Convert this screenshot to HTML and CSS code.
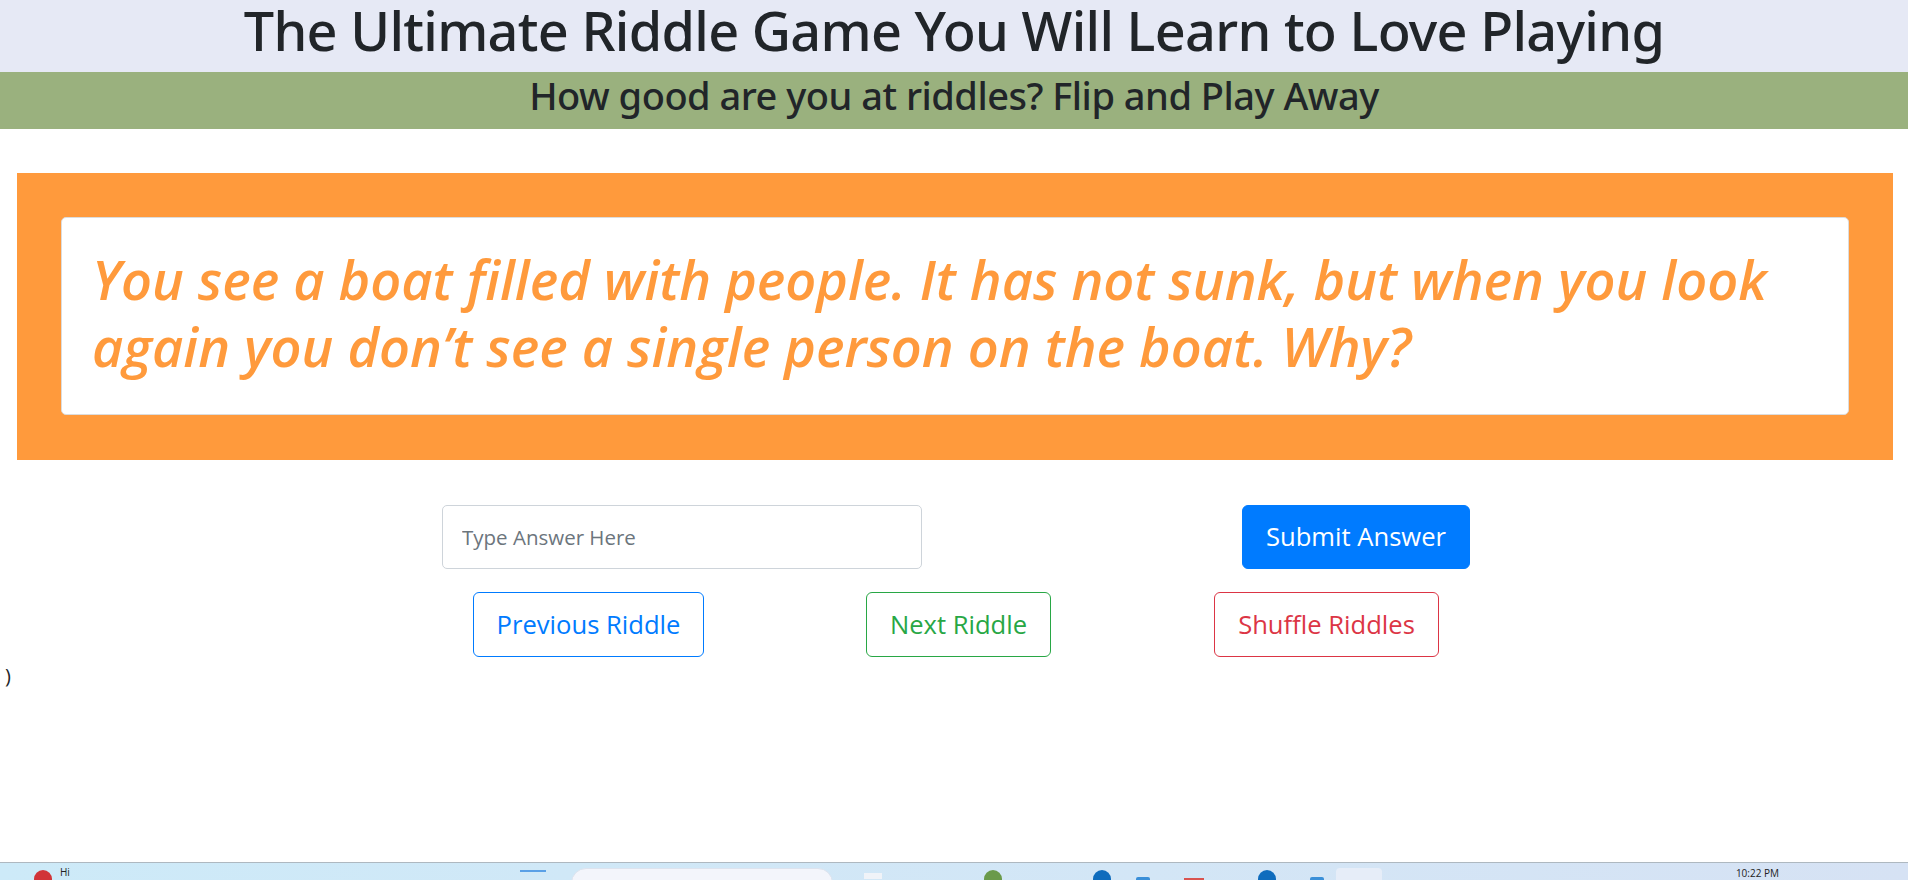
FILE: index.html
```html
<!DOCTYPE html>
<html lang="en">
<head>
<meta charset="utf-8">
<title>Riddle Game</title>
<link rel="stylesheet" href="styles.css">
</head>
<body>
<header class="title-band">
  <h1 class="title">The Ultimate Riddle Game You Will Learn to Love Playing</h1>
</header>
<div class="sub-band">
  <h2 class="subtitle">How good are you at riddles? Flip and Play Away</h2>
</div>
<section class="riddle-panel">
  <div class="riddle-card">
    <h1 class="riddle-text">You see a boat filled with people. It has not sunk, but when you look again you don’t see a single person on the boat. Why?</h1>
  </div>
</section>
<div class="answer-row">
  <input class="answer-input" type="text" placeholder="Type Answer Here">
  <button class="btn btn-submit">Submit Answer</button>
</div>
<div class="nav-row">
  <div class="nav-cell"><button class="btn btn-outline-blue">Previous Riddle</button></div>
  <div class="nav-cell"><button class="btn btn-outline-green">Next Riddle</button></div>
  <div class="nav-cell"><button class="btn btn-outline-red">Shuffle Riddles</button></div>
</div>
<p class="stray">)</p>
<div class="taskbar">
  <span class="tb-dot tb-red tb-first"></span>
  <span class="tb-text">Hi</span>
  <span class="tb-bar tb-gap1"></span>
  <span class="tb-search"></span>
  <span class="tb-square"></span>
  <span class="tb-dot tb-green tb-gap2"></span>
  <span class="tb-dot tb-blue tb-gap3"></span>
  <span class="tb-mini tb-gap4"></span>
  <span class="tb-tick tb-gap5"></span>
  <span class="tb-dot tb-blue tb-gap6"></span>
  <span class="tb-mini tb-gap7"></span>
  <span class="tb-tile"></span>
  <span class="tb-time">10:22 PM</span>
</div>
</body>
</html>
```

FILE: styles.css
```css
* {
  box-sizing: border-box;
}

html, body {
  margin: 0;
  padding: 0;
  background: #ffffff;
}

body {
  font-family: "Open Sans", "Noto Sans", sans-serif;
  color: #212529;
  height: 880px;
  overflow: hidden;
}

.title-band {
  background: #e6e9f5;
  height: 72px;
  text-align: center;
  overflow: hidden;
}

.title {
  margin: 0;
  font-family: "Noto Sans", "Open Sans", sans-serif;
  font-size: 54px;
  font-weight: 500;
  letter-spacing: -0.7px;
  line-height: 60px;
  padding-bottom: 12px;
  color: #212529;
}

.sub-band {
  background: #9ab17e;
  height: 57px;
  text-align: center;
}

.subtitle {
  margin: 0;
  font-family: "Noto Sans", "Open Sans", sans-serif;
  font-size: 38px;
  font-weight: 500;
  letter-spacing: -0.5px;
  line-height: 47px;
  padding-bottom: 10px;
  color: #212529;
}

.riddle-panel {
  background: #ff9a3c;
  margin: 44px 15px 0 17px;
  padding: 44px 44px 45px 44px;
}

.riddle-card {
  background: #ffffff;
  border: 1px solid #dcdcdc;
  border-radius: 5px;
  padding: 28px 30px 34px 30px;
}

.riddle-text {
  margin: 0;
  color: #ff9a3c;
  font-size: 54px;
  font-style: italic;
  font-weight: 600;
  line-height: 67px;
}

.answer-row {
  width: 1028px;
  margin: 45px 0 0 calc(50% - 512px);
  display: flex;
  justify-content: space-between;
  align-items: flex-start;
}

.answer-input {
  width: 480px;
  height: 64px;
  border: 1px solid #ced4da;
  border-radius: 5px;
  padding: 0 19px;
  font-family: "Open Sans", "Noto Sans", sans-serif;
  font-size: 20.5px;
  color: #495057;
  background: #fff;
  outline: none;
}

.answer-input::placeholder {
  color: #6c757d;
  opacity: 1;
}

.btn {
  font-family: "Open Sans", "Noto Sans", sans-serif;
  font-size: 25.6px;
  font-weight: 400;
  line-height: 38px;
  padding: 12px 23px;
  border-radius: 6px;
  border: 1px solid transparent;
  background: transparent;
  cursor: pointer;
}

.btn-submit {
  background: #007bff;
  border-color: #007bff;
  color: #ffffff;
}

.nav-row {
  margin-top: 23px;
  display: grid;
  grid-template-columns: 370px 370px 366px;
  justify-content: center;
  padding-left: 5px;
}

.nav-cell {
  display: flex;
  justify-content: center;
}

.nav-cell .btn {
  line-height: 39px;
}

.btn-outline-blue {
  color: #007bff;
  border-color: #007bff;
}

.btn-outline-green {
  color: #28a745;
  border-color: #28a745;
}

.btn-outline-red {
  color: #dc3545;
  border-color: #dc3545;
}

.stray {
  margin: 4px 0 0 0;
  padding-left: 5px;
  font-size: 20px;
  line-height: 30px;
  color: #212529;
}

/* OS taskbar strip at the bottom of the screenshot */
.taskbar {
  position: fixed;
  left: 0;
  right: 0;
  bottom: 0;
  height: 18px;
  border-top: 1px solid #aeb8c0;
  background: linear-gradient(to right, #cdeaf8, #d3e6f6 60%, #d6e2f4);
  display: flex;
  align-items: flex-start;
  overflow: hidden;
}

.tb-dot {
  flex: none;
  width: 18px;
  height: 18px;
  border-radius: 50%;
  margin-top: 7px;
}

.tb-red { background: #d13438; }
.tb-green { background: #6a9a4a; }
.tb-blue { background: #0f6cbd; }

.tb-first { margin-left: 34px; }

.tb-text {
  font-family: "Open Sans", sans-serif;
  font-size: 10px;
  line-height: 12px;
  margin: 3px 0 0 8px;
  color: #222;
}

.tb-bar {
  flex: none;
  width: 26px;
  height: 2px;
  margin-top: 7px;
  background: #5aa0e6;
}

.tb-gap1 { margin-left: 450px; }

.tb-search {
  flex: none;
  width: 262px;
  height: 30px;
  margin: 5px 0 0 25px;
  border-radius: 15px;
  background: #f3f5fb;
  border: 1px solid #dde3ee;
}

.tb-square {
  flex: none;
  width: 18px;
  height: 6px;
  margin: 10px 0 0 31px;
  background: #f0f3f8;
}

.tb-gap2 { margin-left: 102px; }
.tb-gap3 { margin-left: 91px; }

.tb-mini {
  flex: none;
  width: 14px;
  height: 4px;
  margin-top: 14px;
  border-radius: 2px 2px 0 0;
  background: #3a8fd8;
}

.tb-gap4 { margin-left: 25px; }

.tb-tick {
  flex: none;
  width: 20px;
  height: 3px;
  margin-top: 15px;
  border-top: 2px solid #d9534f;
}

.tb-gap5 { margin-left: 34px; }
.tb-gap6 { margin-left: 54px; }
.tb-gap7 { margin-left: 34px; }

.tb-tile {
  flex: none;
  width: 46px;
  height: 30px;
  margin: 5px 0 0 12px;
  border-radius: 4px;
  background: #e6edf8;
}

.tb-time {
  font-family: "Open Sans", sans-serif;
  font-size: 10px;
  line-height: 12px;
  margin: 4px 0 0 354px;
  color: #222;
}
```
